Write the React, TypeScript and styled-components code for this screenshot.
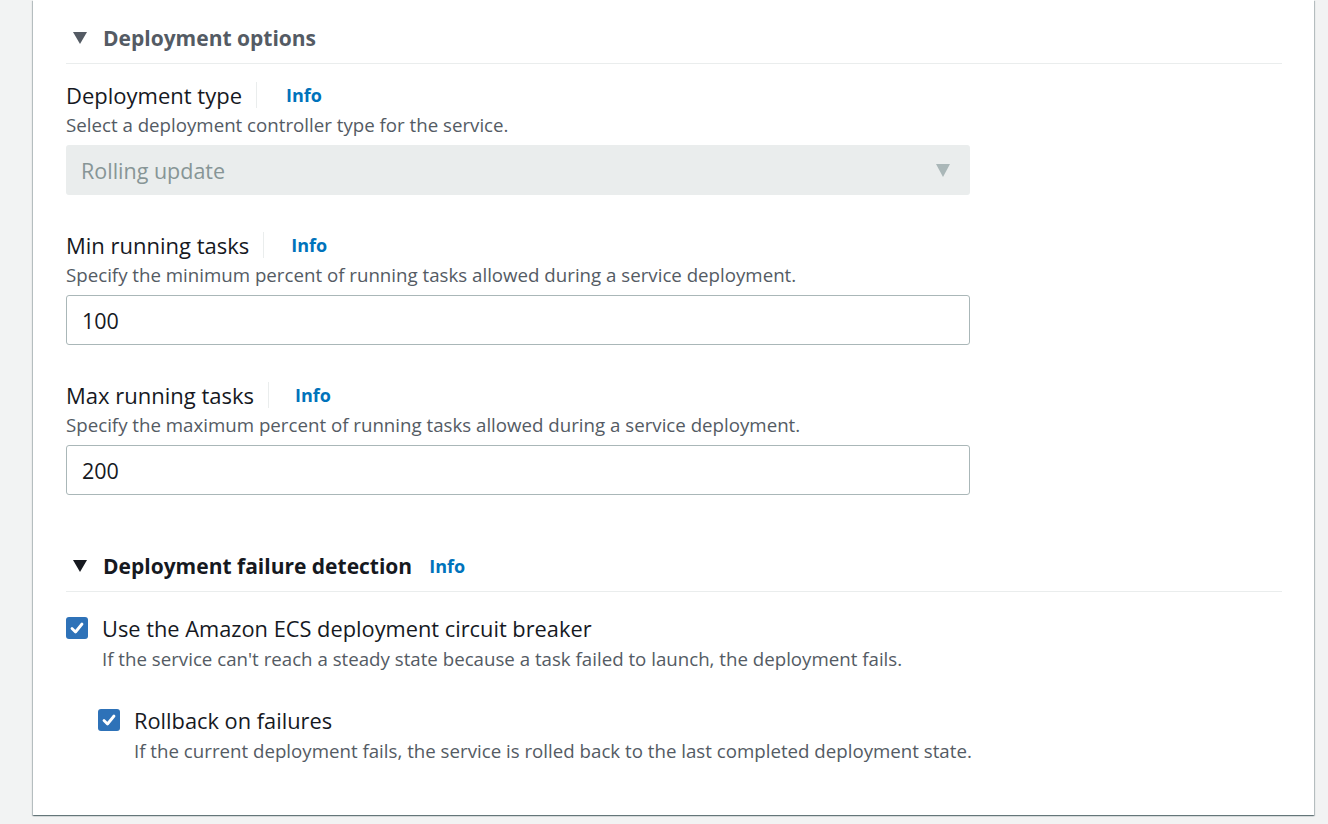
import React from 'react';
import styled, { createGlobalStyle } from 'styled-components';

const GlobalStyle = createGlobalStyle`
  body {
    margin: 0;
    background: #f2f3f3;
    font-family: "Open Sans", "Noto Sans", sans-serif;
    color: #16191f;
  }
`;

const Page = styled.div`
  height: 824px;
  overflow: hidden;
`;

const Card = styled.div`
  margin-left: 33px;
  width: 1281px;
  height: 815px;
  box-sizing: border-box;
  background: #fff;
  padding: 13px 32px 0 33px;
  box-shadow: 0 1px 1px 0 rgba(0, 28, 36, 0.35), 1px 1px 1px 0 rgba(0, 28, 36, 0.2),
    -1px 1px 1px 0 rgba(0, 28, 36, 0.2);
`;

const SectionHeader = styled.div<{ $top: number }>`
  display: flex;
  align-items: center;
  height: 51px;
  margin-top: ${(p) => p.$top}px;
  border-bottom: 1px solid #eaeded;
  padding-left: 7px;
  padding-bottom: 1px;
  box-sizing: border-box;
`;

const Caret = styled.span<{ $color?: string }>`
  width: 0;
  height: 0;
  border-left: 7px solid transparent;
  border-right: 7px solid transparent;
  border-top: 12px solid ${(p) => p.$color || '#16191f'};
  margin-right: 16px;
`;

const SectionTitle = styled.h2<{ $muted?: boolean }>`
  margin: 0;
  font-size: 21px;
  font-weight: 700;
  color: ${(p) => (p.$muted ? '#545b64' : '#16191f')};
`;

const InfoLink = styled.a<{ $gap?: number }>`
  color: #0073bb;
  font-weight: 700;
  font-size: 18px;
  text-decoration: none;
  margin-left: ${(p) => p.$gap ?? 17}px;
`;

const Field = styled.div<{ $top: number }>`
  margin-top: ${(p) => p.$top}px;
`;

const LabelRow = styled.div`
  display: flex;
  align-items: center;
  height: 34px;
`;

const Label = styled.label`
  font-size: 22px;
  color: #16191f;
  padding-right: 14px;
  border-right: 1px solid #eaeded;
  line-height: 26px;
`;

const Description = styled.div`
  font-size: 18.7px;
  color: #545b64;
  line-height: 26px;
  margin-bottom: 7px;
`;

const SelectBox = styled.div`
  width: 904px;
  height: 50px;
  box-sizing: border-box;
  background: #eaeded;
  border-radius: 3px;
  display: flex;
  align-items: center;
  justify-content: space-between;
  padding: 0 20px 0 15px;
  font-size: 21.5px;
  color: #879596;
`;

const SelectCaret = styled.span`
  width: 0;
  height: 0;
  border-left: 7px solid transparent;
  border-right: 7px solid transparent;
  border-top: 13px solid #aab7b8;
`;

const TextInput = styled.input`
  display: block;
  width: 904px;
  height: 50px;
  box-sizing: border-box;
  border: 1px solid #aab7b8;
  border-radius: 3px;
  padding: 0 15px;
  font-family: inherit;
  font-size: 21.5px;
  color: #16191f;
  outline: none;
`;

const CheckRow = styled.div<{ $top: number; $indent?: number }>`
  display: flex;
  gap: 14px;
  margin-top: ${(p) => p.$top}px;
  padding-left: ${(p) => p.$indent ?? 0}px;
`;

const Box = styled.span`
  width: 22px;
  height: 22px;
  flex: none;
  border-radius: 3px;
  background: #2e72b8;
  display: flex;
  align-items: center;
  justify-content: center;
  margin-top: 1px;
`;

const CheckText = styled.div`
  display: flex;
  flex-direction: column;
`;

const CheckLabel = styled.div`
  font-size: 21.8px;
  line-height: 26px;
  color: #16191f;
`;

const CheckDesc = styled.div`
  font-size: 18.7px;
  line-height: 26px;
  color: #545b64;
  margin-top: 4px;
`;

const Check = () => (
  <Box>
    <svg width="14" height="12" viewBox="0 0 14 12">
      <path d="M2 6.5 L5.5 10 L12 2" fill="none" stroke="#fff" strokeWidth="2.8" strokeLinecap="round" strokeLinejoin="round" />
    </svg>
  </Box>
);

const App: React.FC = () => (
  <Page>
    <GlobalStyle />
    <Card>
      <SectionHeader $top={0}>
        <Caret $color="#545b64" />
        <SectionTitle $muted>Deployment options</SectionTitle>
      </SectionHeader>

      <Field $top={14}>
        <LabelRow>
          <Label>Deployment type</Label>
          <InfoLink $gap={29}>Info</InfoLink>
        </LabelRow>
        <Description>Select a deployment controller type for the service.</Description>
        <SelectBox>
          <span>Rolling update</span>
          <SelectCaret />
        </SelectBox>
      </Field>

      <Field $top={33}>
        <LabelRow>
          <Label>Min running tasks</Label>
          <InfoLink $gap={27}>Info</InfoLink>
        </LabelRow>
        <Description>Specify the minimum percent of running tasks allowed during a service deployment.</Description>
        <TextInput defaultValue="100" />
      </Field>

      <Field $top={33}>
        <LabelRow>
          <Label>Max running tasks</Label>
          <InfoLink $gap={26}>Info</InfoLink>
        </LabelRow>
        <Description>Specify the maximum percent of running tasks allowed during a service deployment.</Description>
        <TextInput defaultValue="200" />
      </Field>

      <SectionHeader $top={46}>
        <Caret />
        <SectionTitle>Deployment failure detection</SectionTitle>
        <InfoLink>Info</InfoLink>
      </SectionHeader>

      <CheckRow $top={24}>
        <Check />
        <CheckText>
          <CheckLabel>Use the Amazon ECS deployment circuit breaker</CheckLabel>
          <CheckDesc>If the service can't reach a steady state because a task failed to launch, the deployment fails.</CheckDesc>
        </CheckText>
      </CheckRow>

      <CheckRow $top={36} $indent={32}>
        <Check />
        <CheckText>
          <CheckLabel>Rollback on failures</CheckLabel>
          <CheckDesc>If the current deployment fails, the service is rolled back to the last completed deployment state.</CheckDesc>
        </CheckText>
      </CheckRow>
    </Card>
  </Page>
);

export default App;
